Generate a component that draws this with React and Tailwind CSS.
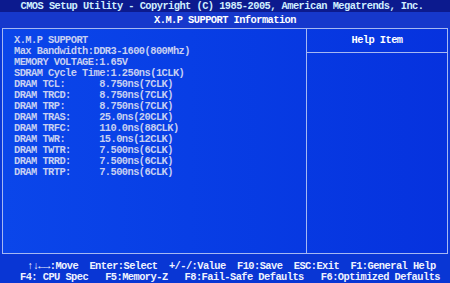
import React from "react";

const rows = [
  ["DRAM TCL:", "8.750ns(7CLK)"],
  ["DRAM TRCD:", "8.750ns(7CLK)"],
  ["DRAM TRP:", "8.750ns(7CLK)"],
  ["DRAM TRAS:", "25.0ns(20CLK)"],
  ["DRAM TRFC:", "110.0ns(88CLK)"],
  ["DRAM TWR:", "15.0ns(12CLK)"],
  ["DRAM TWTR:", "7.500ns(6CLK)"],
  ["DRAM TRRD:", "7.500ns(6CLK)"],
  ["DRAM TRTP:", "7.500ns(6CLK)"],
];

export default function App() {
  return (
    <div
      className="w-[450px] h-[283px] flex flex-col bg-[#0a38d8] text-[10.4px] tracking-[-0.56px] leading-[11px] font-bold whitespace-pre overflow-hidden"
      style={{ fontFamily: '"Liberation Mono", "DejaVu Sans Mono", monospace' }}
    >
      {/* title bar */}
      <div className="h-[12px] flex items-center justify-center bg-[#0c1a8e] text-[#cfeeff] pr-[6px]">
        CMOS Setup Utility - Copyright (C) 1985-2005, American Megatrends, Inc.
      </div>
      <div className="h-[16px] flex items-center justify-center bg-[#1638cc] text-white">
        X.M.P SUPPORT Information
      </div>

      {/* main box */}
      <div className="mx-[2px] h-[226px] flex border border-[#a6b8f2] bg-gradient-to-r from-[#0b46ea] to-[#0632de]">
        <div className="w-[304px] border-r border-[#a6b8f2] pl-[11px] pt-[6px] text-[#c6cff2]">
          <div>X.M.P SUPPORT</div>
          <div>Max Bandwidth:DDR3-1600(800Mhz)</div>
          <div>MEMORY VOLTAGE:1.65V</div>
          <div>SDRAM Cycle Time:1.250ns(1CLK)</div>
          {rows.map(([label, value]) => (
            <div key={label}>
              {label.padEnd(15, " ")}
              {value}
            </div>
          ))}
        </div>
        <div className="flex-1 flex flex-col">
          <div className="h-[24px] flex items-center justify-center border-b border-[#a6b8f2] text-white">
            Help Item
          </div>
          <div className="flex-1" />
        </div>
      </div>

      {/* footer */}
      <div className="flex-1 bg-[#0936d4] pt-[7px] text-[#eef2ff]">
        <div className="pl-[27px]">
          {"↑↓←→:Move  Enter:Select  +/-/:Value  F10:Save  ESC:Exit  F1:General Help"}
        </div>
        <div className="pl-[20px]">
          {"F4: CPU Spec   F5:Memory-Z   F8:Fail-Safe Defaults   F6:Optimized Defaults"}
        </div>
      </div>
    </div>
  );
}
